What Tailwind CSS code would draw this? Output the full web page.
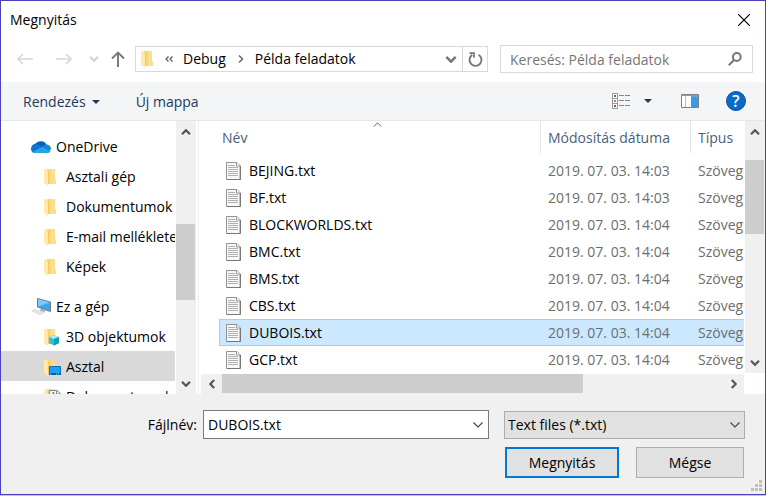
<!DOCTYPE html>
<html lang="hu">
<head>
<meta charset="utf-8">
<title>Megnyitás</title>
<script src="https://cdn.jsdelivr.net/npm/@tailwindcss/browser@4"></script>
</head>
<body class="bg-[#c4c4d8]">
<svg class="hidden">
  <symbol id="folder" viewBox="0 0 14 18">
    <path d="M3 1H11V11L12 12V16H3Z" fill="#f8d777"/>
    <path d="M7 1H11V11L12 12V16H7Z" fill="#fbdf8c"/>
    <path d="M0 1 3 2 4 4V18L0 15Z" fill="#ffeaab"/>
    <path d="M3 2 4.500 4V16H4V4Z" fill="#e9bd58"/>
  </symbol>
  <symbol id="file" viewBox="0 0 15 18">
    <path d="M.5.5H11L14 3.500V17.500H.5Z" fill="#f8f8f8" stroke="#929292"/>
    <path d="M10.500.5V4H14" fill="#fff" stroke="#929292"/>
    <path d="M1 17.500H14.500V4" fill="none" stroke="#777"/>
    <path d="M2 3.500H9M2 5.500H12M2 7.500H12M2 9.500H12M2 11.500H12M2 13.500H12" stroke="#b0b0b0"/>
  </symbol>
  <symbol id="down" viewBox="0 0 10 6"><path d="M1 .8 5 4.800 9 .8" fill="none" stroke="currentColor" stroke-width="2.200"/></symbol>
  <symbol id="thin-down" viewBox="0 0 10 6"><path d="M.5.5 5 5 9.500.5" fill="none" stroke="currentColor" stroke-width="1.100"/></symbol>
</svg>
<div class="flex h-[calc(100vh-1px)] flex-col overflow-hidden border border-[#4a42bd] bg-white font-['Open_Sans','Noto_Sans',sans-serif] text-[14px] leading-5 text-black">
  <header class="flex h-9 shrink-0 items-center justify-between pt-px pr-[15px] pl-[9px]">
    <h1>Megnyitás</h1>
    <button aria-label="Bezárás"><svg class="size-3" viewBox="0 0 12 12"><path d="M0 0 12 12M12 0 0 12" stroke="#000" stroke-width="1.200"/></svg></button>
  </header>

  <nav class="flex shrink-0 items-center pt-2 pr-3 pb-[9px] pl-4">
    <button aria-label="Vissza" class="w-[39px] text-[#d8d8d8]"><svg class="h-3 w-4" viewBox="0 0 16 12"><path d="M16 6H1M6 1 1 6 6 11" fill="none" stroke="currentColor" stroke-width="1.700"/></svg></button>
    <button aria-label="Előre" class="w-[33px] text-[#d8d8d8]"><svg class="h-3 w-4" viewBox="0 0 16 12"><path d="M0 6H15M10 1 15 6 10 11" fill="none" stroke="currentColor" stroke-width="1.700"/></svg></button>
    <button aria-label="Előzmények" class="w-[22px] text-[#d4d4d4]"><svg class="h-[6px] w-[10px]"><use href="#down"/></svg></button>
    <button aria-label="Fel" class="w-6"><svg class="h-4 w-[14px]" viewBox="0 0 14 16"><path d="M7 16V1.500M1 7.500 7 1.500 13 7.500" fill="none" stroke="#777" stroke-width="1.900"/></svg></button>
    <div class="flex h-[26px] min-w-0 flex-1 items-center border border-[#d9d9d9]">
      <svg class="ml-[5px] h-[18px] w-[14px] shrink-0"><use href="#folder"/></svg>
      <span class="ml-[10px] flex-none text-[#555]"><svg class="h-[6px] w-2" viewBox="0 0 8 6"><path d="M3.500.5 1 3 3.500 5.500M7.500.5 5 3 7.500 5.500" fill="none" stroke="currentColor" stroke-width="1.200"/></svg></span>
      <a href="#" class="ml-[10px]">Debug</a>
      <svg class="ml-3 h-2 w-[6px] flex-none" viewBox="0 0 6 8"><path d="M1 .5 4.500 4 1 7.500" fill="none" stroke="#666" stroke-width="1.500"/></svg>
      <a href="#" class="ml-[11px] truncate">Példa feladatok</a>
      <button aria-label="Korábbi helyek" class="mr-[5px] ml-auto text-[#777]"><svg class="h-[7px] w-3"><use href="#down"/></svg></button>
      <button aria-label="Frissítés" class="flex h-full w-[25px] items-center justify-center border-l border-[#d9d9d9]"><svg class="size-[15px]" viewBox="0 0 15 15"><path d="M10.500 2.700A6 6 0 1 1 4.200 2.900" fill="none" stroke="#777" stroke-width="1.900"/><path d="M1.500 1.200H6V5.700" fill="none" stroke="#777" stroke-width="1.700"/></svg></button>
    </div>
    <label class="ml-3 flex h-7 w-[253px] shrink-0 items-center border border-[#d9d9d9] pr-[10px] pl-[9px]">
      <input type="search" aria-label="Keresés" placeholder="Keresés: Példa feladatok" class="min-w-0 flex-1 pt-px outline-none placeholder:text-[#767676]">
      <svg class="size-[14px]" viewBox="0 0 14 14"><circle cx="8.800" cy="5" r="3.900" fill="none" stroke="#777" stroke-width="2"/><path d="M6 8 .8 13.200" stroke="#777" stroke-width="2"/></svg>
    </label>
  </nav>

  <div class="flex h-[39px] shrink-0 items-center border-b border-[#e5e6e8] bg-[#f4f5f7] pr-[19px] pl-[22px] text-[#1e395b]">
    <button class="flex items-center gap-[6px] pt-px">Rendezés <svg class="h-1 w-2" viewBox="0 0 8 4"><path d="M0 0H8L4 4Z" fill="currentColor"/></svg></button>
    <button class="ml-9 pt-px">Új mappa</button>
    <button aria-label="Nézet" class="ml-auto flex items-center gap-[14px]">
      <svg class="h-4 w-[18px]" viewBox="0 0 18 16"><path d="M.5.5H5.500V15.500H.5ZM.5 5.500H5.500M.5 10.500H5.500" fill="#fff" stroke="#999"/><path d="M7 2.500H18M7 7.500H18M7 12.500H18" stroke="#888" stroke-dasharray="5 1"/><path d="M2 2H4V4H2Z" fill="#3b78b8"/><path d="M2 7H4V9H2Z" fill="#b58a3c"/><path d="M2 12H4V14H2Z" fill="#c4392b"/></svg>
      <svg class="h-1 w-2" viewBox="0 0 8 4"><path d="M0 0H8L4 4Z" fill="currentColor"/></svg>
    </button>
    <button aria-label="Előnézet" class="ml-[29px]"><svg class="h-[14px] w-[18px]" viewBox="0 0 18 14"><path d="M.5.5H17.500V13.500H.5Z" fill="#fff" stroke="#808080"/><path d="M1 1H17V2H1Z" fill="#999"/><path d="M4.500 2V13" stroke="#bbb"/><path d="M10 1H17V13H10Z" fill="#3c9ae4"/><path d="M11 2H16" stroke="#b8dcf8" stroke-dasharray="1 1"/></svg></button>
    <button aria-label="Súgó" class="ml-[27px] flex size-5 items-center justify-center rounded-full border border-[#0b4f9c] bg-[#0a6acb] text-[16px] font-semibold text-white">?</button>
  </div>

  <main class="flex min-h-0 flex-1">
    <aside class="flex w-[195px] shrink-0">
      <ul class="w-[174px] overflow-hidden pt-[10px] whitespace-nowrap">
        <li class="flex h-[30px] items-center gap-[5px] pt-px pl-[30px]"><svg class="h-[14px] w-5 shrink-0" viewBox="0 0 20 14"><path d="M4.500 4A6 5 0 0 1 15.500 4.500L10 9Z" fill="#0a5fb4"/><path d="M4.500 3.500C2 4 0 6 0 9 0 11 1.500 13 4 13L12 7.500C10 6 7 3.500 4.500 3.500Z" fill="#0d74cf"/><path d="M10 7 15 4.300C18 4.500 20 6.500 20 9L18 12Z" fill="#1386dc"/><path d="M1.500 12 11 7 19.500 11C19 12.500 18 13 16 13H4C3 13 2 12.700 1.500 12Z" fill="#29a3ea"/></svg>OneDrive</li>
        <li class="flex h-[30px] items-center gap-2 pt-px pl-[43px]"><svg class="h-[18px] w-[14px] shrink-0"><use href="#folder"/></svg>Asztali gép</li>
        <li class="flex h-[30px] items-center gap-2 pt-px pl-[43px]"><svg class="h-[18px] w-[14px] shrink-0"><use href="#folder"/></svg>Dokumentumok</li>
        <li class="flex h-[30px] items-center gap-2 pt-px pl-[43px]"><svg class="h-[18px] w-[14px] shrink-0"><use href="#folder"/></svg>E-mail mellékletek</li>
        <li class="flex h-[30px] items-center gap-2 pt-px pl-[43px]"><svg class="h-[18px] w-[14px] shrink-0"><use href="#folder"/></svg>Képek</li>
        <li class="mt-[10px] flex h-[30px] items-center gap-[5px] pt-px pl-[30px]"><svg class="h-[17px] w-5 shrink-0" viewBox="0 0 20 17"><path d="M6.500.5 19.500 4V13.500L6.500 9Z" fill="#3aa7f0" stroke="#6f7a83"/><path d="M7 1 19 4.500 7 8.500Z" fill="#7cc8f8"/><path d="M10 10.500 14 12V14L9 13Z" fill="#a7adb2"/><path d="M0 13 4 11 14 14.500 9 17Z" fill="#cfd4d8"/><path d="M2 13 10 16M4 12 12 15" stroke="#eef0f2"/></svg>Ez a gép</li>
        <li class="flex h-[30px] items-center gap-1 pt-px pl-[43px]"><svg class="h-[18px] w-[18px] shrink-0" viewBox="0 0 18 18"><use href="#folder" width="14" height="18"/><path d="M5 9 10 7 15 9V15L10 17.500 5 15Z" fill="#35bfd0"/><path d="M5 9 10 7 15 9 10 11Z" fill="#a5eef3"/><path d="M10 11 15 9V15L10 17.500Z" fill="#0f9db4"/></svg>3D objektumok</li>
        <li class="flex h-[30px] items-center gap-1 bg-[#d9d9d9] pt-px pl-[43px]"><svg class="h-[18px] w-[18px] shrink-0" viewBox="0 0 18 18"><use href="#folder" width="14" height="18"/><path d="M5.500 8.500H16.500V16.500H5.500Z" fill="#1ba1f5" stroke="#176fab"/><path d="M5 15H17V17H5Z" fill="#0f5d96"/><path d="M6 16H8M12 16H16" stroke="#a6d8fa" stroke-dasharray="1 1"/></svg>Asztal</li>
        <li class="flex h-[30px] items-center gap-1 pt-px pl-[43px]"><svg class="h-[18px] w-[18px] shrink-0" viewBox="0 0 18 18"><use href="#folder" width="14" height="18"/><path d="M5.500 2.500H13L16.500 5.500V17.500H5.500Z" fill="#f5f5f5" stroke="#888"/><path d="M12.500 2.500V6H16.500" fill="none" stroke="#888"/><path d="M9 7V4L11 7" fill="none" stroke="#2c86c8"/></svg>Dokumentumok</li>
      </ul>
      <div class="ml-px flex flex-1 flex-col bg-[#f0f0f0] text-[#555]">
        <button aria-label="Görgetés fel" class="mr-px flex h-[21px] items-center justify-center"><svg class="h-[6px] w-[10px] rotate-180"><use href="#down"/></svg></button>
        <div class="flex flex-1 flex-col"><div class="grow-82"></div><div class="mr-px grow-76 bg-[#cdcdcd]"></div><div class="grow-73"></div></div>
        <button aria-label="Görgetés le" class="mr-px flex h-[21px] items-center justify-center"><svg class="h-[6px] w-[10px]"><use href="#down"/></svg></button>
      </div>
    </aside>

    <section class="ml-[2px] flex min-w-0 flex-1 flex-col border-l border-[#f0f0f0] pl-[2px]">
      <div class="flex min-h-0 flex-1">
        <div class="relative min-w-0 flex-1 overflow-hidden pl-[18px]">
          <svg class="absolute top-px left-[172px] h-[5px] w-[9px] rotate-180 text-[#555]"><use href="#thin-down"/></svg>
          <table class="w-full table-fixed border-separate border-spacing-0 text-left whitespace-nowrap text-[#6d6d6d]">
            <thead class="text-[#4c607a]">
              <tr>
                <th class="p-0 pb-1 font-normal"><div class="flex h-8 items-center pt-px pl-[3px]">Név</div></th>
                <th class="w-[150px] p-0 pb-1 font-normal"><div class="flex h-8 items-center border-l border-[#e5e5e5] pt-px pl-[7px]">Módosítás dátuma</div></th>
                <th class="w-[54px] p-0 pb-1 font-normal"><div class="flex h-8 items-center border-l border-[#e5e5e5] pt-px pl-[7px]">Típus</div></th>
              </tr>
            </thead>
            <tbody>
              <tr class="h-[27px]"><td class="p-0 pl-[7px] text-black"><span class="flex items-center gap-2"><svg class="h-[18px] w-[15px]"><use href="#file"/></svg>BEJING.txt</span></td><td class="p-0 pl-2">2019. 07. 03. 14:03</td><td class="overflow-hidden p-0 pl-2">Szöveg</td></tr>
              <tr class="h-[27px]"><td class="p-0 pl-[7px] text-black"><span class="flex items-center gap-2"><svg class="h-[18px] w-[15px]"><use href="#file"/></svg>BF.txt</span></td><td class="p-0 pl-2">2019. 07. 03. 14:03</td><td class="overflow-hidden p-0 pl-2">Szöveg</td></tr>
              <tr class="h-[27px]"><td class="p-0 pl-[7px] text-black"><span class="flex items-center gap-2"><svg class="h-[18px] w-[15px]"><use href="#file"/></svg>BLOCKWORLDS.txt</span></td><td class="p-0 pl-2">2019. 07. 03. 14:04</td><td class="overflow-hidden p-0 pl-2">Szöveg</td></tr>
              <tr class="h-[27px]"><td class="p-0 pl-[7px] text-black"><span class="flex items-center gap-2"><svg class="h-[18px] w-[15px]"><use href="#file"/></svg>BMC.txt</span></td><td class="p-0 pl-2">2019. 07. 03. 14:04</td><td class="overflow-hidden p-0 pl-2">Szöveg</td></tr>
              <tr class="h-[27px]"><td class="p-0 pl-[7px] text-black"><span class="flex items-center gap-2"><svg class="h-[18px] w-[15px]"><use href="#file"/></svg>BMS.txt</span></td><td class="p-0 pl-2">2019. 07. 03. 14:04</td><td class="overflow-hidden p-0 pl-2">Szöveg</td></tr>
              <tr class="h-[27px]"><td class="p-0 pl-[7px] text-black"><span class="flex items-center gap-2"><svg class="h-[18px] w-[15px]"><use href="#file"/></svg>CBS.txt</span></td><td class="p-0 pl-2">2019. 07. 03. 14:04</td><td class="overflow-hidden p-0 pl-2">Szöveg</td></tr>
              <tr class="h-[27px] bg-[#cce8ff]" aria-selected="true"><td class="border-y border-l border-[#99d1ff] p-0 pl-[6px] text-black"><span class="flex items-center gap-2"><svg class="h-[18px] w-[15px]"><use href="#file"/></svg>DUBOIS.txt</span></td><td class="border-y border-[#99d1ff] p-0 pl-2">2019. 07. 03. 14:04</td><td class="overflow-hidden border-y border-[#99d1ff] p-0 pl-2">Szöveg</td></tr>
              <tr class="h-[27px]"><td class="p-0 pl-[7px] text-black"><span class="flex items-center gap-2"><svg class="h-[18px] w-[15px]"><use href="#file"/></svg>GCP.txt</span></td><td class="p-0 pl-2">2019. 07. 03. 14:04</td><td class="overflow-hidden p-0 pl-2">Szöveg</td></tr>
            </tbody>
          </table>
        </div>
        <div class="mb-px ml-px flex w-5 flex-col bg-[#f0f0f0] text-[#555]">
          <button aria-label="Lista fel" class="mr-px flex h-[21px] items-center justify-center"><svg class="h-[6px] w-[10px] rotate-180"><use href="#down"/></svg></button>
          <div class="flex flex-1 flex-col"><div class="grow-18"></div><div class="mr-px grow-74 bg-[#cdcdcd]"></div><div class="grow-118"></div></div>
          <button aria-label="Lista le" class="mr-px flex h-[21px] items-center justify-center"><svg class="h-[6px] w-[10px]"><use href="#down"/></svg></button>
        </div>
      </div>
      <div class="mr-[21px] flex h-5 bg-[#f0f0f0] text-[#555]">
        <button aria-label="Lista balra" class="mb-px flex w-[21px] items-center justify-center"><svg class="h-[6px] w-[10px] rotate-90"><use href="#down"/></svg></button>
        <div class="mb-px flex flex-1"><div class="w-[72%] bg-[#cdcdcd]"></div></div>
        <button aria-label="Lista jobbra" class="mb-px flex w-[21px] items-center justify-center"><svg class="h-[6px] w-[10px] -rotate-90"><use href="#down"/></svg></button>
      </div>
    </section>
  </main>

  <footer class="relative shrink-0 bg-[#f0f0f0] pt-4 pr-5 pb-4">
    <div class="flex items-center">
      <label for="filename" class="w-[202px] shrink-0 pr-[6px] text-right">Fájlnév:</label>
      <div class="flex h-[29px] min-w-0 flex-1 items-center border border-[#7a7a7a] bg-white">
        <input id="filename" type="text" value="DUBOIS.txt" class="h-full min-w-0 flex-1 pl-1 outline-none">
        <button aria-label="Korábbi fájlnevek" class="mr-[5px] text-[#444]"><svg class="h-[6px] w-[10px]"><use href="#thin-down"/></svg></button>
      </div>
      <div class="relative ml-[15px] w-[241px] shrink-0">
        <select aria-label="Fájltípus" class="block h-7 w-full appearance-none border border-[#adadad] bg-[#e1e1e1] pl-[3px]"><option>Text files (*.txt)</option></select>
        <svg class="pointer-events-none absolute top-[11px] right-[5px] h-[6px] w-[10px] text-[#444]"><use href="#thin-down"/></svg>
      </div>
    </div>
    <div class="mt-2 flex justify-end gap-[17px] pr-px">
      <button class="h-[31px] w-[114px] border-2 border-[#0078d7] bg-[#e1e1e1]">Megnyitás</button>
      <button class="h-[31px] w-[108px] border border-[#adadad] bg-[#e1e1e1]">Mégse</button>
    </div>
    <svg class="absolute right-[3px] bottom-[3px] size-[11px]" viewBox="0 0 11 11"><path d="M8 0H11V3H8ZM8 4H11V7H8ZM8 8H11V11H8ZM4 4H7V7H4ZM4 8H7V11H4ZM0 8H3V11H0Z" fill="#bfbfbf"/></svg>
  </footer>
</div>
</body>
</html>
